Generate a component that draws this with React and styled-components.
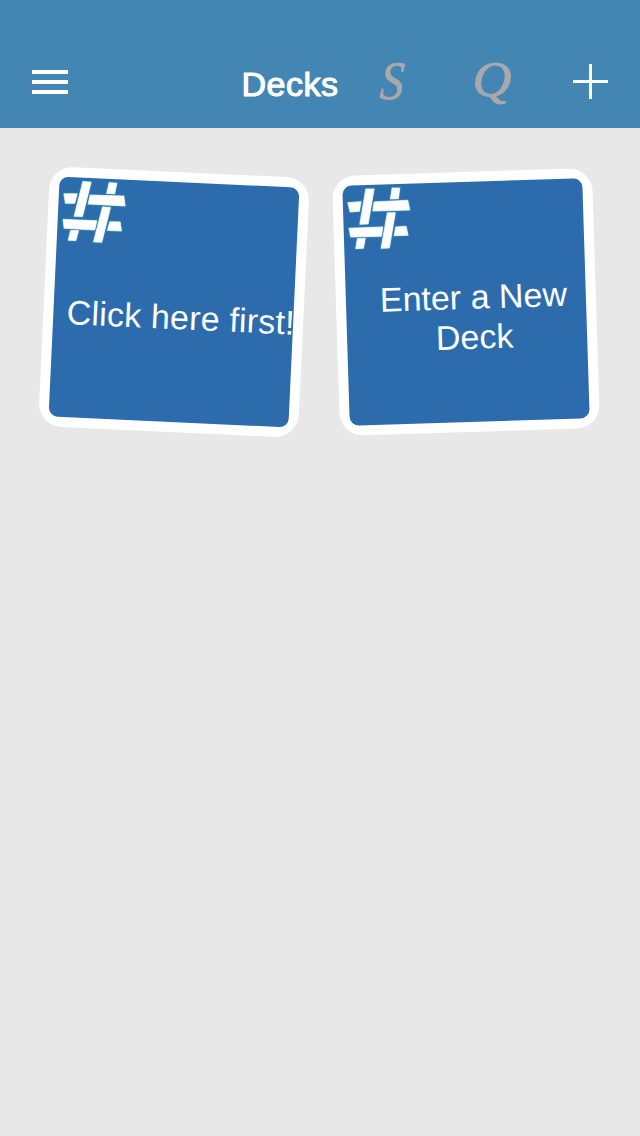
import React from 'react';
import styled, { createGlobalStyle } from 'styled-components';

const GlobalStyle = createGlobalStyle`
  *, *::before, *::after { box-sizing: border-box; }
  body {
    margin: 0;
    background: #e8e8e8;
    font-family: "Liberation Sans", Arial, sans-serif;
  }
`;

const Screen = styled.div`
  width: 640px;
  min-height: 1136px;
  background: #e8e8e8;
  overflow: hidden;
`;

const Header = styled.header`
  height: 128px;
  padding: 40px 32px 0;
  background: #4386b4;
  color: #fff;
`;

const NavBar = styled.nav`
  height: 84px;
  display: flex;
  align-items: center;
`;

const IconButton = styled.button`
  display: flex;
  padding: ${(p) => p.$padding || 0};
  border: 0;
  background: none;
  color: inherit;
`;

const MenuIcon = styled.span`
  width: 36px;
  height: 24px;
  border: solid #fff;
  border-width: 4px 0;
  padding: 6px 0;

  &::before {
    content: '';
    display: block;
    height: 4px;
    background: #fff;
  }
`;

const Title = styled.h1`
  margin: 0 0 0 172px;
  padding-top: 4px;
  width: 100px;
  display: flex;
  justify-content: center;
  font-size: 34px;
  line-height: 40px;
  font-weight: 400;
  letter-spacing: 0.5px;
  -webkit-text-stroke: 1.1px #fff;
  white-space: nowrap;
`;

const Actions = styled.div`
  flex: 1;
  display: flex;
  align-items: center;
  justify-content: space-between;
  margin-left: 36px;
`;

const LetterButton = styled.button`
  width: 32px;
  height: 60px;
  padding: 0;
  border: 0;
  background: none;
  color: #a9a9ab;
  font: italic 400 ${(p) => p.$size}px/60px "Liberation Serif", "Times New Roman", serif;
  -webkit-text-stroke: 0.8px #a9a9ab;
  display: flex;
  justify-content: center;
  transform: translate(${(p) => p.$shift || '0, 0'}) skewX(${(p) => p.$slant || 0}deg) scaleX(${(p) => p.$stretch || 1});
`;

const DeckGrid = styled.main`
  display: flex;
  gap: 32px;
  padding: 44px 0 0 44px;
`;

const DeckCard = styled.article`
  width: 260px;
  height: 260px;
  padding: 10px;
  border-radius: 23px;
  background: #fff;
  transform: rotate(${(p) => p.$tilt}deg);
`;

const CardFace = styled.div`
  height: 240px;
  border-radius: 9px;
  background: #2c6cad;
`;

const HashMark = styled.svg`
  display: block;
  width: 72px;
  height: 72px;
`;

const DeckName = styled.h2`
  height: 120px;
  margin: 0 -4px 0 11px;
  padding-top: 5px;
  display: flex;
  align-items: center;
  justify-content: center;
  color: #fff;
  font-size: 34px;
  line-height: 40px;
  font-weight: 400;
  letter-spacing: ${(p) => p.$tracking}px;
  text-align: center;
  white-space: pre;
`;

const strands = [
  '5,17 18.3,16.4 16.3,26 7,26.4',
  '23.4,3.9 31.7,4.1 24.6,38.9 16.3,39',
  '49.7,3.7 57.4,4 55.7,14.6 47.7,14.7',
  '31.3,17.1 65,16.5 66.7,26.3 29.7,26.1',
  '5.4,42.6 39.2,42.4 37.5,51.7 6.8,51.4',
  '44.2,28.3 52.2,28.5 45.1,63.6 36.8,63.7',
  '52.2,42.8 62.5,42.5 64.2,51.5 50.2,51.5',
  '13.4,53.3 21.4,53.1 19.1,63.1 11.5,63.2',
];

const decks = [
  { name: 'Click here first!', tilt: 2.65, tracking: 0.2 },
  { name: 'Enter a New\nDeck', tilt: -1.8, tracking: 0 },
];

function Strands(props) {
  return (
    <g {...props}>
      {strands.map((points) => (
        <polygon key={points} points={points} />
      ))}
    </g>
  );
}

export default function App() {
  return (
    <Screen>
      <GlobalStyle />
      <Header>
        <NavBar>
          <IconButton aria-label="Menu">
            <MenuIcon />
          </IconButton>
          <Title>Decks</Title>
          <Actions>
            <LetterButton $size={54} $shift="0.5px, -1px" $slant={-4} $stretch={0.88}>S</LetterButton>
            <LetterButton $size={51} $shift="1px, -3px" $stretch={1.06}>Q</LetterButton>
            <IconButton aria-label="Add deck" $padding="0 0 2px">
              <svg width="35" height="35" viewBox="0 0 35 35">
                <path d="M17.5 0V35M0 17.5H35" stroke="#fff" strokeWidth="3" />
              </svg>
            </IconButton>
          </Actions>
        </NavBar>
      </Header>
      <DeckGrid>
        {decks.map((deck) => (
          <DeckCard key={deck.name} $tilt={deck.tilt}>
            <CardFace>
              <HashMark viewBox="0 0 72 72">
                <Strands stroke="#2b83b0" strokeWidth="2.6" />
                <Strands fill="#fff" stroke="#fff" strokeWidth="0.7" />
              </HashMark>
              <DeckName $tracking={deck.tracking}>{deck.name}</DeckName>
            </CardFace>
          </DeckCard>
        ))}
      </DeckGrid>
    </Screen>
  );
}
